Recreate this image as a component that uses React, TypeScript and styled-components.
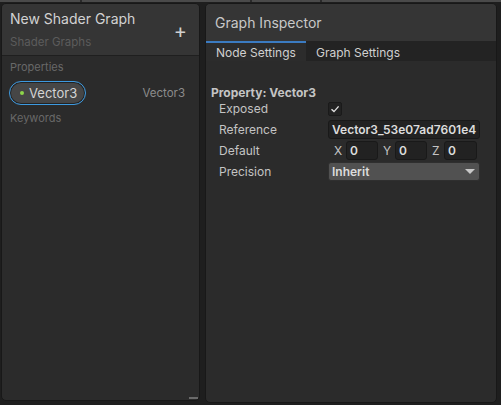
import React from "react";
import styled, { createGlobalStyle } from "styled-components";

const Global = createGlobalStyle`
  html, body { margin: 0; padding: 0; background: #1e1e1e; }
  * { box-sizing: border-box; }
  body { font-family: Inter, "Noto Sans", sans-serif; }
`;

const Root = styled.div`
  width: 501px;
  height: 405px;
  background: #1e1e1e;
  display: flex;
  flex-direction: column;
  overflow: hidden;
`;

const TopStrip = styled.div`
  height: 2px;
  background: linear-gradient(90deg, #4a4a4a 0 80px, #2a2a2a 80px 82px, #4a4a4a 82px 250px, #2a2a2a 250px 252px, #4a4a4a 252px 320px, #2a2a2a 320px 322px, #4a4a4a 322px);
`;

const Main = styled.div`
  display: flex;
  align-items: flex-start;
  gap: 5px;
  padding: 1px 4px 0 1px;
`;

const Panel = styled.div<{ $w: number; $h: number }>`
  width: ${(p) => p.$w}px;
  height: ${(p) => p.$h}px;
  background: #2b2b2b;
  border: 1px solid #181818;
  border-radius: 5px;
  overflow: hidden;
  display: flex;
  flex-direction: column;
  position: relative;
`;

const BlackboardHeader = styled.div`
  height: 52px;
  flex: none;
  background: #353535;
  border-bottom: 1px solid #1f1f1f;
  display: flex;
  align-items: flex-start;
  justify-content: space-between;
  padding: 0 12px 0 8px;
`;

const TitleCol = styled.div`
  display: flex;
  flex-direction: column;
  gap: 8px;
  padding-top: 6px;
`;

const Title = styled.div`
  font-size: 14px;
  color: #d2d2d2;
  line-height: 17px;
`;

const SubTitle = styled.div`
  font-size: 11.5px;
  color: #5c5c5c;
  line-height: 14px;
`;

const Plus = styled.div`
  font-size: 20px;
  color: #d0d0d0;
  line-height: 20px;
  margin-top: 17px;
`;

const SectionLabel = styled.div`
  font-size: 11px;
  color: #686868;
  padding: 0 8px;
  line-height: 14px;
`;

const Body = styled.div`
  display: flex;
  flex-direction: column;
  padding-top: 4px;
`;

const PropRow = styled.div`
  display: flex;
  align-items: center;
  justify-content: space-between;
  padding: 0 14px 0 7px;
  margin: 7px 0 6px;
`;

const Pill = styled.div`
  height: 24px;
  width: 77px;
  border-radius: 12px;
  border: 1.5px solid #3d9ae0;
  background: #464646;
  box-shadow: inset 0 0 0 1px #222;
  display: flex;
  align-items: center;
  padding-left: 10px;
  gap: 5px;
  font-size: 13px;
  color: #d4d4d4;
`;

const Dot = styled.span`
  width: 4px;
  height: 4px;
  border-radius: 50%;
  background: #8ed64a;
`;

const TypeText = styled.div`
  font-size: 11.5px;
  color: #8c8c8c;
`;

const Handle = styled.div`
  position: absolute;
  right: 1px;
  bottom: 1px;
  width: 9px;
  height: 2px;
  background: #6a6a6a;
`;

const InspectorHeader = styled.div`
  height: 37px;
  flex: none;
  background: #353535;
  display: flex;
  align-items: center;
  padding: 0 0 0 9px;
  font-size: 14px;
  color: #c8c8c8;
`;

const TabBar = styled.div`
  height: 20px;
  flex: none;
  background: #232323;
  display: flex;
`;

const Tab = styled.div<{ $active?: boolean }>`
  width: 100px;
  padding-left: 10px;
  display: flex;
  align-items: center;
  font-size: 12px;
  color: #d0d0d0;
  background: ${(p) => (p.$active ? "#2c2c2c" : "transparent")};
  border-top: 2px solid ${(p) => (p.$active ? "#3b7bc1" : "transparent")};
`;

const Settings = styled.div`
  padding: 26px 0 0 5px;
  display: flex;
  flex-direction: column;
`;

const PropTitle = styled.div`
  font-size: 12px;
  font-weight: 700;
  color: #c4c4c4;
  line-height: 12px;
  margin-bottom: -1px;
`;

const FieldRow = styled.div`
  display: grid;
  grid-template-columns: 109px 152px;
  align-items: center;
  height: 21px;
  padding-left: 8px;
`;

const FieldLabel = styled.div`
  font-size: 12px;
  color: #c4c4c4;
`;

const Check = styled.div`
  width: 14px;
  height: 14px;
  border-radius: 2px;
  background: #222;
  border: 1px solid #1a1a1a;
  display: flex;
  align-items: center;
  justify-content: center;
`;

const TextInput = styled.div<{ $w?: number }>`
  height: 19px;
  width: ${(p) => (p.$w ? `${p.$w}px` : "100%")};
  background: #222222;
  border: 1px solid #191919;
  border-radius: 3px;
  font-size: 12px;
  font-weight: 600;
  color: #dcdcdc;
  padding: 0 3px;
  display: flex;
  align-items: center;
  overflow: hidden;
  white-space: nowrap;
`;

const VecGroup = styled.div`
  display: flex;
  align-items: center;
  padding-left: 1px;
`;

const AxisLabel = styled.span`
  font-size: 12px;
  color: #c4c4c4;
  width: 17px;
  padding-left: 5px;
  flex: none;
`;

const Dropdown = styled.div`
  height: 19px;
  background: #515151;
  border-radius: 3px;
  border: 1px solid #2f2f2f;
  display: flex;
  align-items: center;
  justify-content: space-between;
  padding: 0 4px 0 3px;
  font-size: 12px;
  font-weight: 600;
  color: #dcdcdc;
`;

const Arrow = styled.span`
  width: 0;
  height: 0;
  border-left: 5px solid transparent;
  border-right: 5px solid transparent;
  border-top: 5px solid #c8c8c8;
`;

export default function App() {
  return (
    <Root>
      <Global />
      <TopStrip />
      <Main>
        <Panel $w={199} $h={398}>
          <BlackboardHeader>
            <TitleCol>
              <Title>New Shader Graph</Title>
              <SubTitle>Shader Graphs</SubTitle>
            </TitleCol>
            <Plus>+</Plus>
          </BlackboardHeader>
          <Body>
            <SectionLabel>Properties</SectionLabel>
            <PropRow>
              <Pill>
                <Dot />
                Vector3
              </Pill>
              <TypeText>Vector3</TypeText>
            </PropRow>
            <SectionLabel>Keywords</SectionLabel>
          </Body>
          <Handle />
        </Panel>
        <Panel $w={292} $h={400}>
          <InspectorHeader>Graph Inspector</InspectorHeader>
          <TabBar>
            <Tab $active>Node Settings</Tab>
            <Tab>Graph Settings</Tab>
          </TabBar>
          <Settings>
            <PropTitle>Property: Vector3</PropTitle>
            <FieldRow>
              <FieldLabel>Exposed</FieldLabel>
              <Check>
                <svg width="10" height="10" viewBox="0 0 10 10">
                  <path d="M1.5 5.2 L4 7.6 L8.6 2.4" fill="none" stroke="#e0e0e0" strokeWidth="1.4" />
                </svg>
              </Check>
            </FieldRow>
            <FieldRow>
              <FieldLabel>Reference</FieldLabel>
              <TextInput>Vector3_53e07ad7601e4</TextInput>
            </FieldRow>
            <FieldRow>
              <FieldLabel>Default</FieldLabel>
              <VecGroup>
                <AxisLabel>X</AxisLabel>
                <TextInput $w={32}>0</TextInput>
                <AxisLabel>Y</AxisLabel>
                <TextInput $w={32}>0</TextInput>
                <AxisLabel>Z</AxisLabel>
                <TextInput $w={33}>0</TextInput>
              </VecGroup>
            </FieldRow>
            <FieldRow>
              <FieldLabel>Precision</FieldLabel>
              <Dropdown>
                Inherit
                <Arrow />
              </Dropdown>
            </FieldRow>
          </Settings>
        </Panel>
      </Main>
    </Root>
  );
}
